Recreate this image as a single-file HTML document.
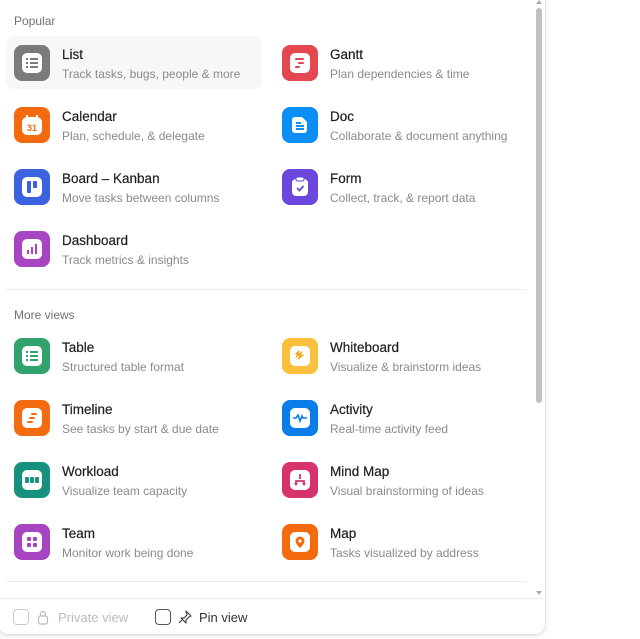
<!DOCTYPE html><html><head><style>
*{margin:0;padding:0;box-sizing:border-box}
body{width:640px;height:639px;background:#fff;font-family:"Liberation Sans",sans-serif;position:relative;overflow:hidden}
.panel{position:absolute;left:-2px;top:-10px;width:547px;height:644px;background:#fff;border-radius:10px;box-shadow:0 2px 6px rgba(0,0,0,.12),0 0 0 1px rgba(0,0,0,.05)}
.lbl{position:absolute;left:14px;font-size:12px;color:#707070}
.hl{position:absolute;left:6px;top:36px;width:256px;height:53px;background:#f7f7f7;border-radius:8px}
.it{position:absolute;height:36px}
.ic{position:absolute;left:0;top:0;width:36px;height:36px;border-radius:8px}
.ic svg{position:absolute;left:8px;top:8px}
.t{position:absolute;left:48px;top:2px;font-size:13.5px;color:#1f1f1f;white-space:nowrap;-webkit-text-stroke:0.2px #1f1f1f}
.s{position:absolute;left:48px;top:22px;font-size:12px;color:#8a8a8a;white-space:nowrap}
.hr{position:absolute;left:6px;width:520px;height:1px;background:#ececec}
.sb{position:absolute;left:536px;top:8px;width:6px;height:395px;background:#c1c1c1;border-radius:3px}
.cb{position:absolute;top:609px;width:16px;height:16px;border:1px solid #555;border-radius:4px}
</style></head><body>
<div class="panel"></div>
<div class="sb"></div>
<div style="position:absolute;left:536px;top:0;width:0;height:0;border-left:3px solid transparent;border-right:3px solid transparent;border-bottom:4px solid #aaa"></div>
<div style="position:absolute;left:536px;top:591px;width:0;height:0;border-left:3px solid transparent;border-right:3px solid transparent;border-top:4px solid #aaa"></div>
<div class="lbl" style="top:14px">Popular</div>
<div class="hl"></div>

<div class="it" style="left:14px;top:45px"><div class="ic" style="background:#7b7b7b"><svg width="20" height="20"><rect width="20" height="20" rx="5" fill="#fff"/><g fill="#7b7b7b"><rect x="4" y="5" width="2" height="2"/><rect x="8" y="5" width="8" height="2"/><rect x="4" y="9" width="2" height="2"/><rect x="8" y="9" width="8" height="2"/><rect x="4" y="13" width="2" height="2"/><rect x="8" y="13" width="8" height="2"/></g></svg></div><div class="t">List</div><div class="s">Track tasks, bugs, people &amp; more</div></div>
<div class="it" style="left:14px;top:107px"><div class="ic" style="background:#f46a0e"><svg width="20" height="20"><rect y="2" width="20" height="18" rx="5" fill="#fff"/><rect x="4" y="0" width="2" height="4" fill="#fff"/><rect x="14" y="0" width="2" height="4" fill="#fff"/><text x="10" y="16" font-size="9" font-weight="bold" fill="#f46a0e" text-anchor="middle" font-family="Liberation Sans">31</text></svg></div><div class="t">Calendar</div><div class="s">Plan, schedule, &amp; delegate</div></div>
<div class="it" style="left:14px;top:169px"><div class="ic" style="background:#3b63e0"><svg width="20" height="20"><rect width="20" height="20" rx="5" fill="#fff"/><rect x="5" y="4" width="4" height="12" rx="1" fill="#3b63e0"/><rect x="11" y="4" width="4" height="7" rx="1" fill="#3b63e0"/></svg></div><div class="t">Board – Kanban</div><div class="s">Move tasks between columns</div></div>
<div class="it" style="left:14px;top:231px"><div class="ic" style="background:#a744c2"><svg width="20" height="20"><rect width="20" height="20" rx="5" fill="#fff"/><g fill="#a744c2"><rect x="5" y="11" width="2" height="4"/><rect x="9" y="8" width="2" height="7"/><rect x="13" y="5" width="2" height="10"/></g></svg></div><div class="t">Dashboard</div><div class="s">Track metrics &amp; insights</div></div>

<div class="it" style="left:282px;top:45px"><div class="ic" style="background:#e4474f"><svg width="20" height="20"><rect width="20" height="20" rx="5" fill="#fff"/><g fill="#e4474f"><rect x="5" y="5" width="9" height="2" rx="1"/><rect x="8" y="9" width="6" height="2" rx="1"/><rect x="5" y="13" width="5" height="2" rx="1"/></g></svg></div><div class="t">Gantt</div><div class="s">Plan dependencies &amp; time</div></div>
<div class="it" style="left:282px;top:107px"><div class="ic" style="background:#0b8ef5"><svg width="20" height="20"><path d="M5 2h7l5 5v8a3 3 0 0 1-3 3H5a3 3 0 0 1-3-3V5a3 3 0 0 1 3-3z" fill="#fff"/><g fill="#0b8ef5"><rect x="6" y="7" width="5" height="2"/><rect x="6" y="10" width="8" height="2"/><rect x="6" y="13" width="8" height="2"/></g></svg></div><div class="t">Doc</div><div class="s">Collaborate &amp; document anything</div></div>
<div class="it" style="left:282px;top:169px"><div class="ic" style="background:#6b47dc"><svg width="20" height="20"><rect x="2" y="2" width="16" height="17" rx="4" fill="#fff"/><rect x="6" y="0" width="8" height="4" rx="1.5" fill="#fff" stroke="#6b47dc" stroke-width="1"/><path d="M7 11l2.5 2.5L13.5 9" stroke="#6b47dc" stroke-width="1.8" fill="none"/></svg></div><div class="t">Form</div><div class="s">Collect, track, &amp; report data</div></div>

<div class="hr" style="top:289px"></div>
<div class="lbl" style="top:308px">More views</div>

<div class="it" style="left:14px;top:338px"><div class="ic" style="background:#2fa36b"><svg width="20" height="20"><rect width="20" height="20" rx="5" fill="#fff"/><g fill="#2fa36b"><rect x="4" y="5" width="2" height="2"/><rect x="8" y="5" width="8" height="2"/><rect x="4" y="9" width="2" height="2"/><rect x="8" y="9" width="8" height="2"/><rect x="4" y="13" width="2" height="2"/><rect x="8" y="13" width="8" height="2"/></g></svg></div><div class="t">Table</div><div class="s">Structured table format</div></div>
<div class="it" style="left:14px;top:400px"><div class="ic" style="background:#f46a0e"><svg width="20" height="20"><rect width="20" height="20" rx="5" fill="#fff"/><g fill="#f46a0e"><rect x="9" y="5" width="6" height="2" rx="1"/><rect x="7" y="9" width="6" height="2" rx="1"/><rect x="5" y="13" width="6" height="2" rx="1"/></g></svg></div><div class="t">Timeline</div><div class="s">See tasks by start &amp; due date</div></div>
<div class="it" style="left:14px;top:462px"><div class="ic" style="background:#16917f"><svg width="20" height="20"><rect width="20" height="20" rx="5" fill="#fff"/><g fill="#16917f"><rect x="3" y="7" width="4" height="6" rx="1"/><rect x="8" y="7" width="4" height="6" rx="1"/><rect x="13" y="7" width="4" height="6" rx="1"/></g></svg></div><div class="t">Workload</div><div class="s">Visualize team capacity</div></div>
<div class="it" style="left:14px;top:524px"><div class="ic" style="background:#a744c2"><svg width="20" height="20"><rect width="20" height="20" rx="5" fill="#fff"/><g fill="#a744c2"><rect x="5" y="5" width="4" height="4" rx="1"/><rect x="11" y="5" width="4" height="4" rx="1"/><rect x="5" y="11" width="4" height="4" rx="1"/><rect x="11" y="11" width="4" height="4" rx="1"/></g></svg></div><div class="t">Team</div><div class="s">Monitor work being done</div></div>

<div class="it" style="left:282px;top:338px"><div class="ic" style="background:#fbc03d"><svg width="20" height="20"><rect width="20" height="20" rx="5" fill="#fff"/><path d="M6 8l3-3-2 5 4-3-2 5 4-3" stroke="#f0a810" stroke-width="1.5" fill="none" stroke-linecap="round"/></svg></div><div class="t">Whiteboard</div><div class="s">Visualize &amp; brainstorm ideas</div></div>
<div class="it" style="left:282px;top:400px"><div class="ic" style="background:#0b7de8"><svg width="20" height="20"><rect width="20" height="20" rx="5" fill="#fff"/><path d="M3 10h3l2-3 2 6 2-5 1 2h4" stroke="#0b7de8" stroke-width="1.6" fill="none"/></svg></div><div class="t">Activity</div><div class="s">Real-time activity feed</div></div>
<div class="it" style="left:282px;top:462px"><div class="ic" style="background:#d6336c"><svg width="20" height="20"><rect width="20" height="20" rx="5" fill="#fff"/><path d="M10 4v5M6 14v-3h8v3" stroke="#d6336c" stroke-width="1.8" fill="none"/><path d="M4 13h4l-2 3zM12 13h4l-2 3z" fill="#d6336c"/></svg></div><div class="t">Mind Map</div><div class="s">Visual brainstorming of ideas</div></div>
<div class="it" style="left:282px;top:524px"><div class="ic" style="background:#f46a0e"><svg width="20" height="20"><rect width="20" height="20" rx="5" fill="#fff"/><path d="M10 16s-4.5-4-4.5-7a4.5 4.5 0 0 1 9 0c0 3-4.5 7-4.5 7z" fill="#f46a0e"/><circle cx="10" cy="9" r="1.6" fill="#fff"/></svg></div><div class="t">Map</div><div class="s">Tasks visualized by address</div></div>

<div class="hr" style="top:581px"></div>
<div style="position:absolute;left:0;top:598px;width:545px;height:1px;background:#ececec"></div>
<div class="cb" style="left:13px;border-color:#ccc"></div>
<svg style="position:absolute;left:37px;top:609px" width="12" height="16"><rect x="1.5" y="7" width="9" height="8" rx="2" fill="none" stroke="#bbb" stroke-width="1.2"/><path d="M3.5 7V5a2.5 2.5 0 0 1 5 0v2" fill="none" stroke="#bbb" stroke-width="1.2"/></svg>
<div style="position:absolute;left:58px;top:610px;font-size:13px;color:#bbb">Private view</div>
<div class="cb" style="left:155px"></div>
<svg style="position:absolute;left:177px;top:609px" width="16" height="16"><path d="M9 2l5 5-2 1-3 3 0 3-5-5 3 0 3-3zM5 11l-3 3" fill="none" stroke="#444" stroke-width="1.2" stroke-linejoin="round"/></svg>
<div style="position:absolute;left:199px;top:610px;font-size:13px;color:#333">Pin view</div>
</body></html>
